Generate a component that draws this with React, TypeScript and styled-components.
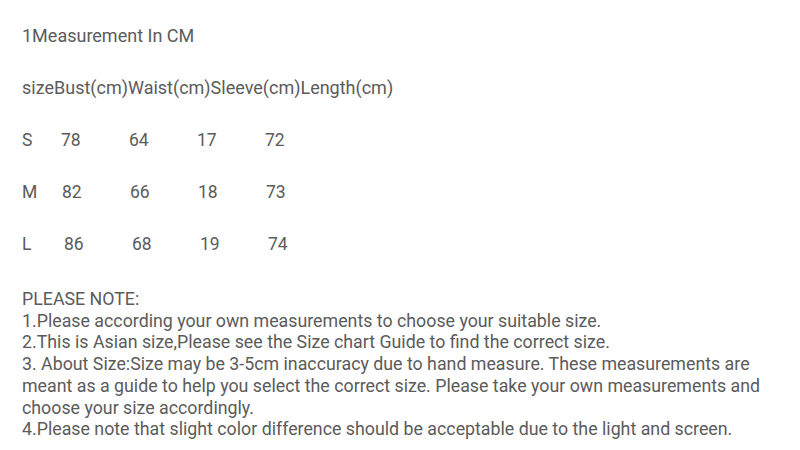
import { createGlobalStyle, styled } from "styled-components";

const GlobalStyle = createGlobalStyle`
	html, body {
		margin: 0;
		padding: 0;
		background: #fff;
	}
	body {
		font-family: Roboto, "Noto Sans", "Liberation Sans", sans-serif;
		color: #5b5b5b;
	}
`;

const rows = [
	{ size: "S", values: ["78", "64", "17", "72"], shift: 0 },
	{ size: "M", values: ["82", "66", "18", "73"], shift: 1 },
	{ size: "L", values: ["86", "68", "19", "74"], shift: 3 },
];

const notes = [
	"1.Please according your own measurements to choose your suitable size.",
	"2.This is Asian size,Please see the Size chart Guide to find the correct size.",
	"3. About Size:Size may be 3-5cm inaccuracy due to hand measure. These measurements are meant as a guide to help you select the correct size. Please take your own measurements and choose your size accordingly.",
	"4.Please note that slight color difference should be acceptable due to the light and screen.",
];

export default function App() {
	return (
		<>
			<GlobalStyle />
			<Page>
				<Heading>1Measurement In CM</Heading>
				<Heading>sizeBust(cm)Waist(cm)Sleeve(cm)Length(cm)</Heading>

				<SizeTable>
					{rows.map((row) => (
						<SizeRow key={row.size}>
							<SizeLabel>{row.size}</SizeLabel>
							<Values $shift={row.shift}>
								{row.values.map((v, i) => (
									<Value key={i}>{v}</Value>
								))}
							</Values>
						</SizeRow>
					))}
				</SizeTable>

				<Notes>
					<p>PLEASE NOTE:</p>
					{notes.map((n) => (
						<p key={n}>{n}</p>
					))}
				</Notes>
			</Page>
		</>
	);
}

const Page = styled.div`
	width: 800px;
	height: 450px;
	box-sizing: border-box;
	padding: 25px 22px 0 22px;
	overflow: hidden;
`;

const Heading = styled.div`
	font-size: 18px;
	line-height: 22px;
	margin-bottom: 30px;
`;

const SizeTable = styled.div`
	display: flex;
	flex-direction: column;
	gap: 30px;
	margin-top: 10px;
`;

const SizeRow = styled.div`
	display: flex;
	align-items: center;
	height: 22px;
	font-size: 17.5px;
`;

const SizeLabel = styled.span`
	width: 39px;
`;

const Values = styled.div<{ $shift: number }>`
	display: grid;
	grid-template-columns: repeat(4, 68px);
	padding-left: ${(p) => p.$shift}px;
`;

const Value = styled.span``;

const Notes = styled.div`
	margin-top: 33px;
	font-size: 17.8px;
	line-height: 21.7px;

	p {
		margin: 0;
	}
`;
